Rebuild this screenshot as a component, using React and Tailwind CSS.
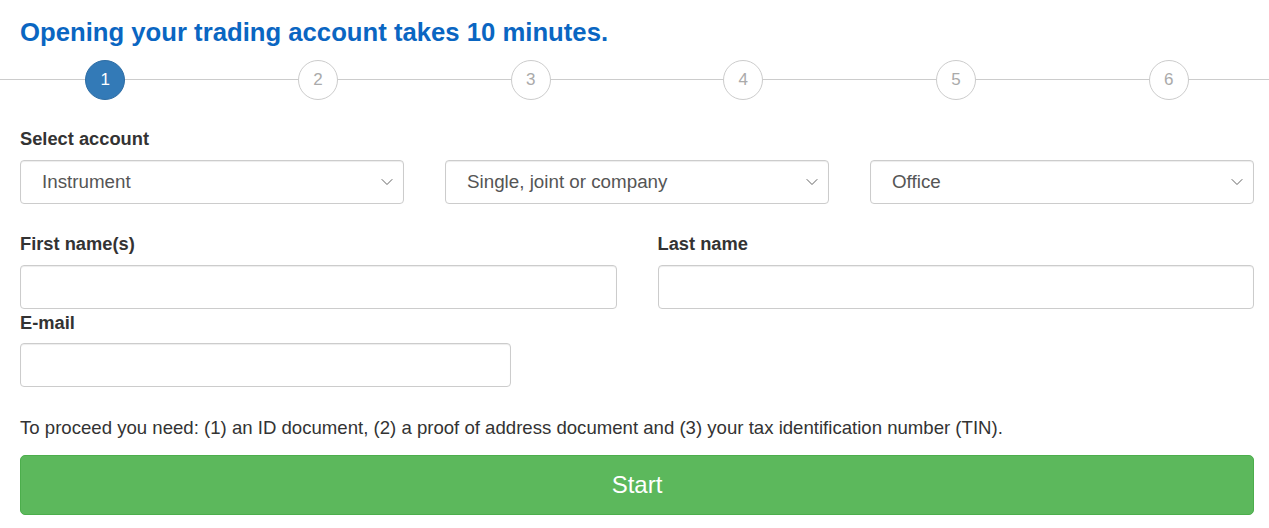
import { ChevronDown } from "lucide-react";

const steps = [1, 2, 3, 4, 5, 6];

function SelectBox({ value }) {
  return (
    <div className="flex h-[44px] items-center justify-between rounded-[4px] border border-[#cccccc] bg-white pl-[21px] pr-[6px] text-[18.8px] text-[#555555] shadow-[inset_0_1px_1px_rgba(0,0,0,0.075)]">
      <span>{value}</span>
      <ChevronDown size={20} strokeWidth={1.1} className="text-[#555555]" />
    </div>
  );
}

function TextInput({ className = "" }) {
  return (
    <input
      type="text"
      className={`h-[44px] rounded-[4px] border border-[#cccccc] bg-white px-3 text-[18px] shadow-[inset_0_1px_1px_rgba(0,0,0,0.075)] outline-none ${className}`}
    />
  );
}

export default function App() {
  return (
    <div className="min-h-screen overflow-hidden bg-white font-['Liberation_Sans',Arial,sans-serif] text-[#333333]">
      <h1 className="px-[20px] pt-[16px] text-[25.7px] font-bold leading-[32px] text-[#0a66c2]">
        Opening your trading account takes 10 minutes.
      </h1>

      {/* progress steps */}
      <div className="relative -ml-px mt-[12px] grid w-[1276px] grid-cols-6">
        <div className="absolute left-0 right-0 top-[19px] h-px bg-[#cccccc]" />
        {steps.map((n) => (
          <div key={n} className="relative flex justify-center">
            <div
              className={
                n === 1
                  ? "flex h-[40px] w-[40px] items-center justify-center rounded-full border border-[#2e6da4] bg-[#337ab7] text-[17px] text-white"
                  : "flex h-[40px] w-[40px] items-center justify-center rounded-full border border-[#cccccc] bg-white text-[17px] text-[#aaaaaa]"
              }
            >
              {n}
            </div>
          </div>
        ))}
      </div>

      <form className="px-[20px] pr-[15px]">
        <label className="mt-[27px] block text-[18.3px] font-bold leading-[24px]">Select account</label>
        <div className="mt-[9px] grid grid-cols-3 gap-[41px]">
          <SelectBox value="Instrument" />
          <SelectBox value="Single, joint or company" />
          <SelectBox value="Office" />
        </div>

        <div className="mt-[28px] grid grid-cols-2 gap-[41px]">
          <div className="flex flex-col">
            <label className="text-[18.3px] font-bold leading-[24px]">First name(s)</label>
            <TextInput className="mt-[9px]" />
          </div>
          <div className="flex flex-col">
            <label className="text-[18.3px] font-bold leading-[24px]">Last name</label>
            <TextInput className="mt-[9px]" />
          </div>
        </div>

        <label className="mt-[2px] block text-[18.3px] font-bold leading-[24px]">E-mail</label>
        <TextInput className="mt-[8px] w-[491px]" />

        <p className="mt-[29px] text-[18.6px] leading-[24px]">
          To proceed you need: (1) an ID document, (2) a proof of address document and (3) your tax identification number (TIN).
        </p>

        <button
          type="button"
          className="mt-[15px] h-[60px] w-full rounded-[5px] border border-[#4cae4c] bg-[#5cb85c] text-[24px] text-white"
        >
          Start
        </button>
      </form>
    </div>
  );
}
